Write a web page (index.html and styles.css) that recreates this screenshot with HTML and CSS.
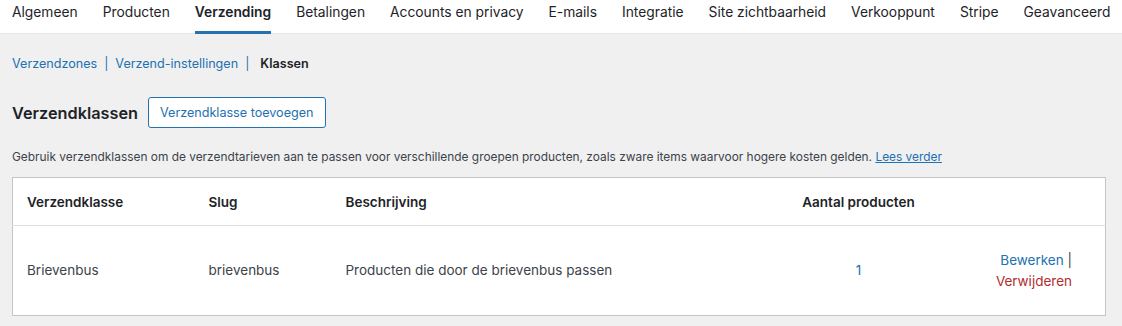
FILE: index.html
```html
<!DOCTYPE html>
<html lang="nl">
<head>
<meta charset="utf-8">
<title>Verzendklassen</title>
<link rel="stylesheet" href="styles.css">
</head>
<body>
<nav class="tabs">
  <a class="tab" href="#">Algemeen</a>
  <a class="tab" href="#">Producten</a>
  <a class="tab active" href="#">Verzending</a>
  <a class="tab" href="#">Betalingen</a>
  <a class="tab" href="#">Accounts en privacy</a>
  <a class="tab" href="#">E-mails</a>
  <a class="tab" href="#">Integratie</a>
  <a class="tab" href="#">Site zichtbaarheid</a>
  <a class="tab" href="#">Verkooppunt</a>
  <a class="tab" href="#">Stripe</a>
  <a class="tab" href="#">Geavanceerd</a>
</nav>
<main class="content">
  <ul class="subsubsub">
    <li><a href="#">Verzendzones</a><span class="sep">|</span></li>
    <li><a href="#">Verzend-instellingen</a><span class="sep">|</span></li>
    <li class="current">Klassen</li>
  </ul>
  <div class="heading">
    <h2 class="title">Verzendklassen</h2>
    <button class="btn" type="button">Verzendklasse toevoegen</button>
  </div>
  <p class="desc">Gebruik verzendklassen om de verzendtarieven aan te passen voor verschillende groepen producten, zoals zware items waarvoor hogere kosten gelden. <a href="#">Lees verder</a></p>
  <table class="classes">
    <colgroup>
      <col class="c1"><col class="c2"><col class="c3"><col class="c4"><col class="c5">
    </colgroup>
    <thead>
      <tr>
        <th>Verzendklasse</th>
        <th>Slug</th>
        <th>Beschrijving</th>
        <th class="center">Aantal producten</th>
        <th></th>
      </tr>
    </thead>
    <tbody>
      <tr>
        <td>Brievenbus</td>
        <td>brievenbus</td>
        <td>Producten die door de brievenbus passen</td>
        <td class="center"><a href="#">1</a></td>
        <td class="actions"><a href="#">Bewerken</a> | <a class="delete" href="#">Verwijderen</a></td>
      </tr>
    </tbody>
  </table>
</main>
</body>
</html>
```
FILE: styles.css
```css
* { box-sizing: border-box; }
html, body { margin: 0; padding: 0; }
body {
  background: #f0f0f1;
  font-family: Inter, "Noto Sans", "Liberation Sans", sans-serif;
  color: #1d2327;
  font-size: 13px;
  width: 1122px;
  height: 326px;
  overflow: hidden;
}
a { color: #2271b1; text-decoration: none; }

.tabs {
  display: flex;
  background: #fff;
  height: 34px;
  border-bottom: 1px solid #e6e6e6;
  padding-left: 12px;
  white-space: nowrap;
}
.tab {
  color: #1d2327;
  font-size: 13.8px;
  line-height: 24px;
  margin-right: 25px;
  border-bottom: 3px solid transparent;
  height: 34px;
}
.tab.active {
  font-weight: 600;
  border-bottom-color: #2271b1;
}

.content { padding: 0 17px 0 12px; }

.subsubsub {
  list-style: none;
  margin: 0;
  padding: 20px 0 0;
  display: flex;
  font-size: 12.6px;
  line-height: 20px;
  height: 63px;
}
.subsubsub .sep { color: #2271b1; margin: 0 7px; }
.subsubsub .current { font-weight: 600; color: #1d2327; margin-left: 4px; }

.heading {
  display: flex;
  align-items: center;
  gap: 10px;
  height: 31px;
}
.title {
  margin: 0;
  font-size: 16.3px;
  font-weight: 600;
  color: #1d2327;
}
.btn {
  font-family: inherit;
  font-size: 12.6px;
  color: #2271b1;
  background: #fff;
  border: 1px solid #2271b1;
  border-radius: 3px;
  height: 31px;
  padding: 0 11px;
}

.desc {
  margin: 20px 0 11px;
  font-size: 11.9px;
  line-height: 18px;
  color: #3c434a;
}
.desc a { text-decoration: underline; }

.classes {
  width: 1093px;
  table-layout: fixed;
  border-collapse: collapse;
  background: #fff;
  border: 1px solid #c3c4c7;
}
.c1 { width: 182px; }
.c2 { width: 137px; }
.c3 { width: 455px; }
.c4 { width: 144px; }
.c5 { width: 175px; }
.classes th {
  text-align: left;
  font-weight: 600;
  font-size: 13.5px;
  height: 48px;
  padding: 0 14px;
  border-bottom: 1px solid #dcdcde;
  color: #1d2327;
}
.classes td {
  height: 90px;
  padding: 0 14px;
  font-size: 13.5px;
  line-height: 21px;
  color: #3c434a;
}
.classes .center { text-align: center; }
.classes .actions {
  text-align: right;
  padding: 0 33px 0 60px;
}
.classes .delete { color: #b32d2e; }
```
